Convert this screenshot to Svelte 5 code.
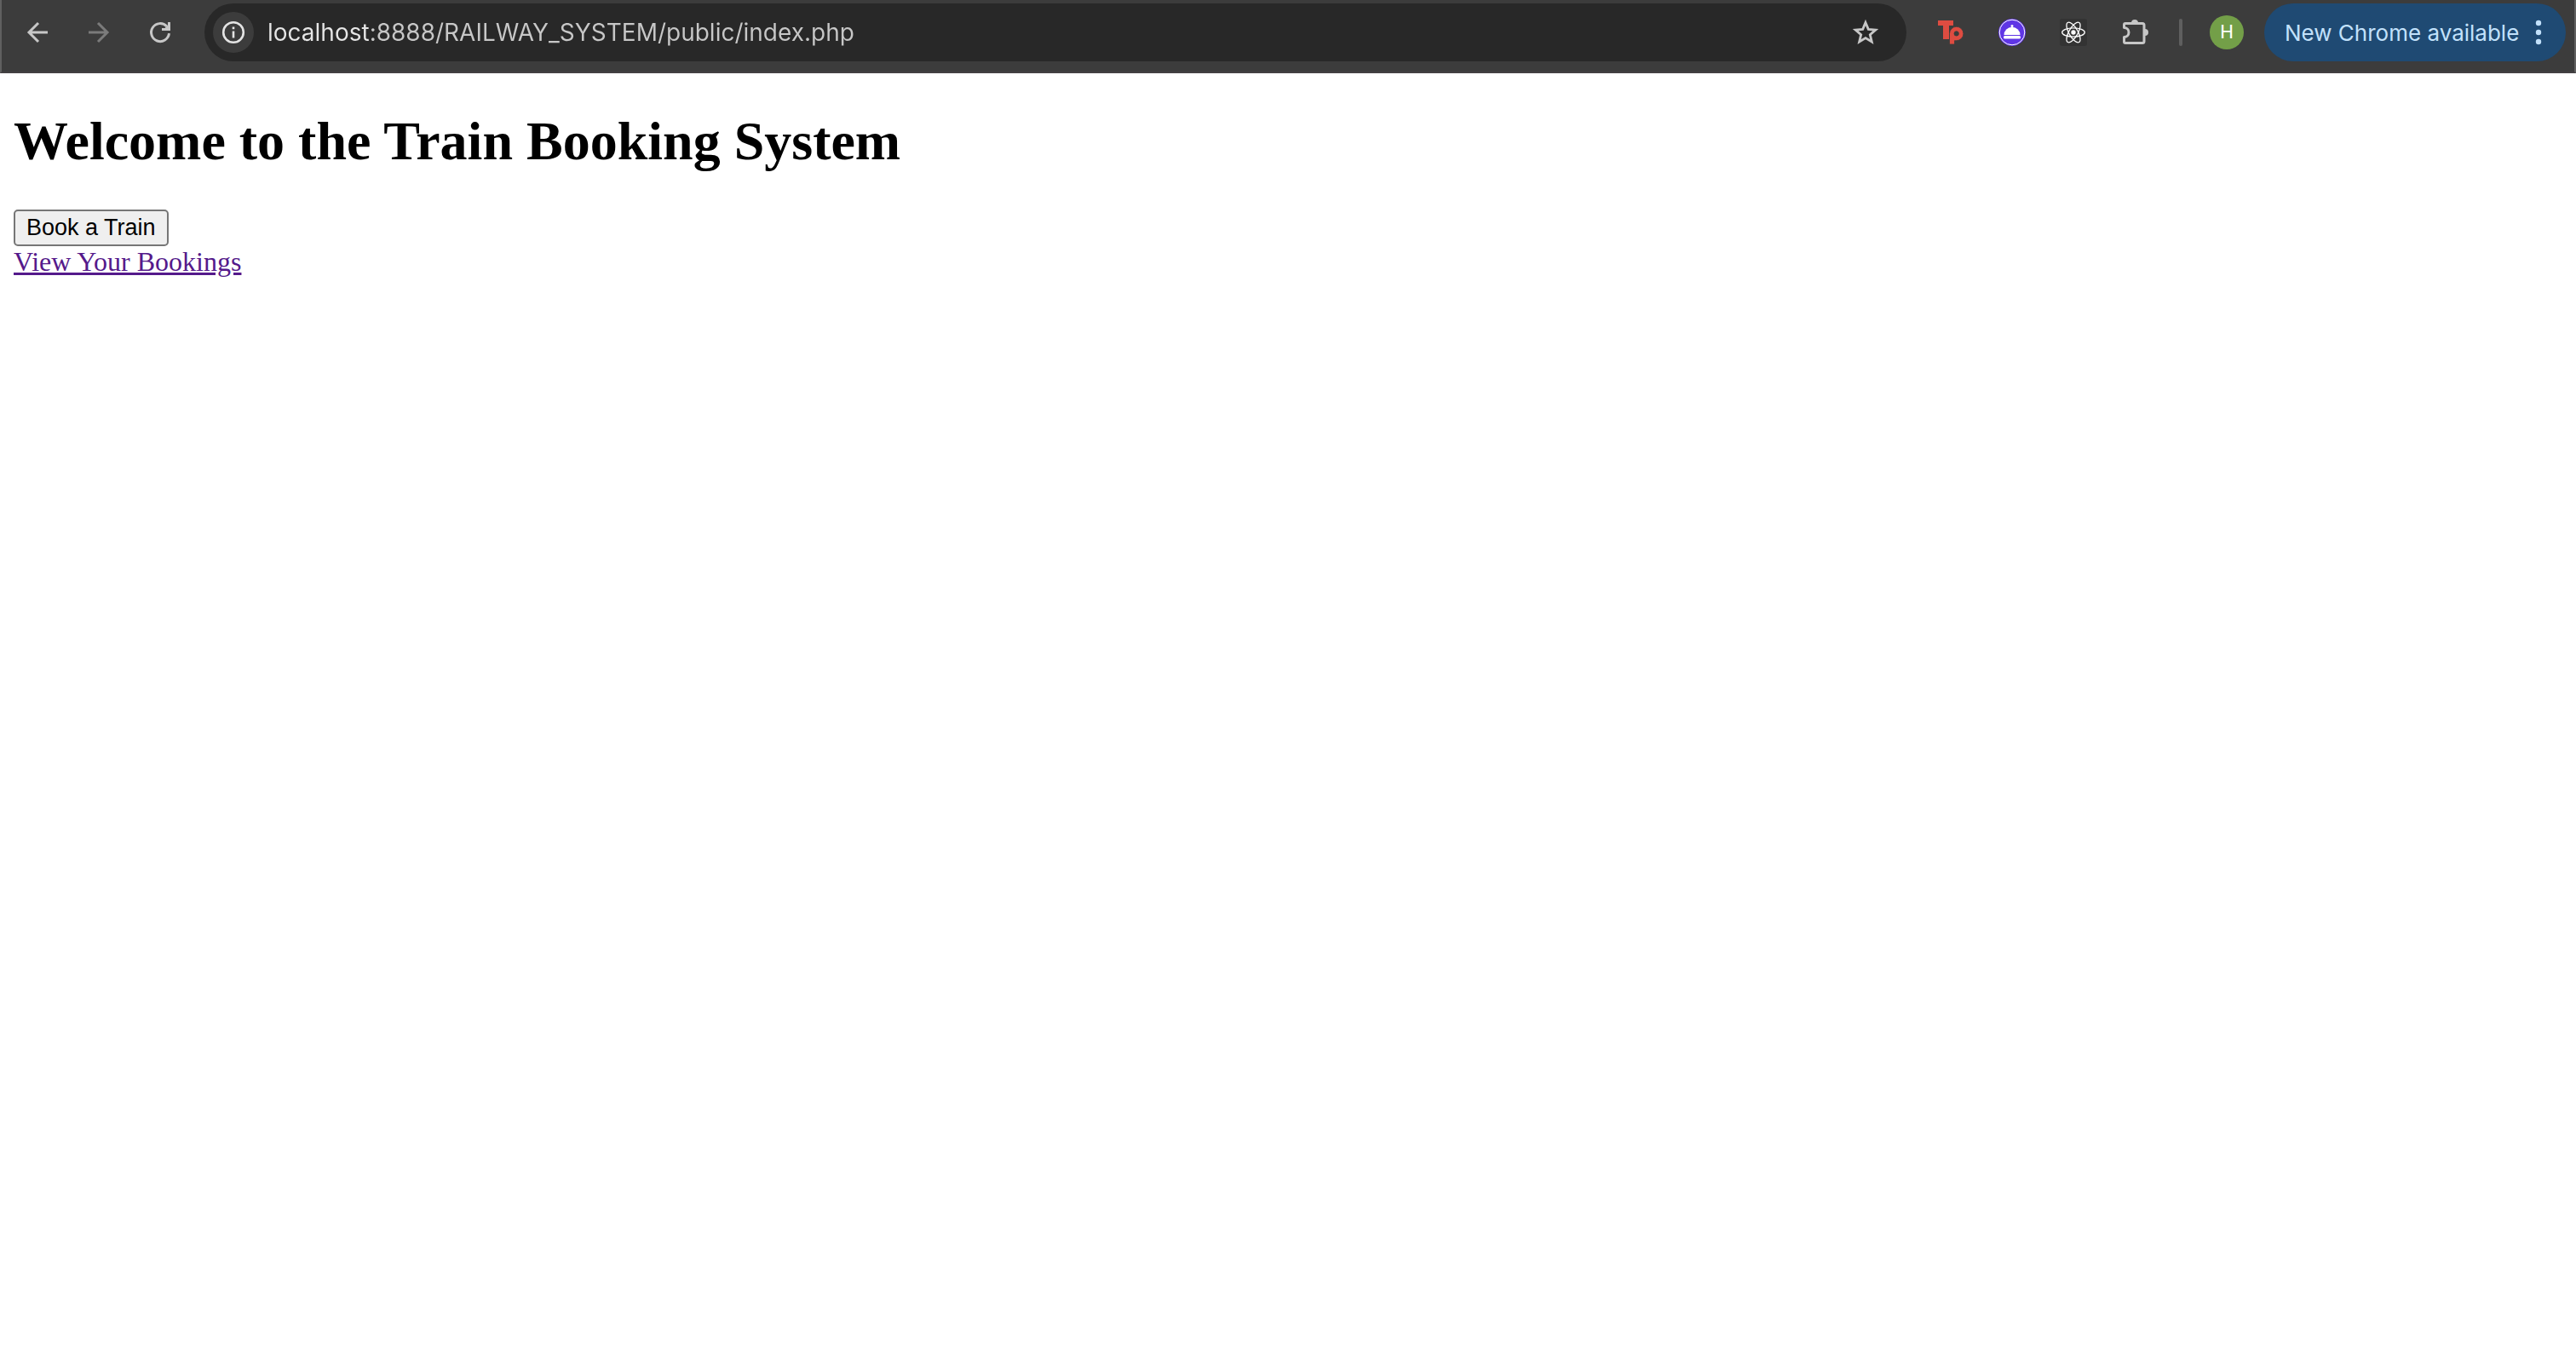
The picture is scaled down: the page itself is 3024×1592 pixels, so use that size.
<script>
  let url = $state('localhost:8888/RAILWAY_SYSTEM/public/index.php');
</script>

<div class="window">
  <header class="toolbar">
    <nav class="group" aria-label="History">
      <button class="tool" aria-label="Back">
        <svg width="36" height="36" viewBox="0 0 36 36" fill="none" stroke="#c7c7c7" stroke-width="3">
          <path d="M30 18H8M19 7L8 18l11 11" />
        </svg>
      </button>
      <button class="tool" aria-label="Forward" disabled>
        <svg width="36" height="36" viewBox="0 0 36 36" fill="none" stroke="#7b7b7b" stroke-width="3">
          <path d="M6 18h22M17 7l11 11-11 11" />
        </svg>
      </button>
      <button class="tool" aria-label="Reload">
        <svg width="36" height="36" viewBox="0 0 36 36" fill="none" stroke="#c7c7c7" stroke-width="3">
          <path d="M28.5 19.2A10.5 10.5 0 1 1 25.8 11" />
          <path d="M30 6v10H20v-3h3.500l3.500-3.500V6z" fill="#c7c7c7" stroke="none" />
        </svg>
      </button>
    </nav>

    <div class="omnibox">
      <button class="info" aria-label="View site information">
        <svg width="28" height="28" viewBox="0 0 28 28">
          <circle cx="14" cy="14" r="11.8" fill="none" stroke="#e3e3e3" stroke-width="2.6" />
          <path d="M12.7 12.5h2.6v8h-2.600zM12.7 7.5h2.6v2.8h-2.600z" fill="#e3e3e3" />
        </svg>
      </button>
      <input class="url" type="text" aria-label="Address" spellcheck="false" bind:value={url} />
      <button class="star" aria-label="Bookmark this tab">
        <svg width="32" height="32" viewBox="0 0 32 32" fill="none" stroke="#c7c7c7" stroke-width="2.8">
          <path d="M16 4.5l3.3 7.9 8.5.7-6.5 5.6 2 8.3-7.3-4.4-7.300 4.4 2-8.3-6.500-5.600 8.500-.7z" />
        </svg>
      </button>
    </div>

    <div class="group">
      <button class="tool" aria-label="Toptal extension">
        <svg width="32" height="32" viewBox="0 0 32 32">
          <path d="M1 2h18v6h-5v16H7V8H1z" fill="#de4c41" />
          <path
            d="M14.5 30V17.5a8.2 8.2 0 1 1 8.2 8.2H20.5V30zM22.7 14.7a2.7 2.7 0 1 0 0 5.4 2.7 2.7 0 0 0 0-5.4z"
            fill="#de4c41" stroke="#3c3c3c" stroke-width="0.8" fill-rule="evenodd" />
        </svg>
      </button>
      <button class="tool" aria-label="Meal extension">
        <svg width="32" height="32" viewBox="0 0 32 32">
          <circle cx="16" cy="16" r="16" fill="#5f35e5" />
          <circle cx="16" cy="16" r="14.8" fill="none" stroke="#fff" stroke-width="1" />
          <circle cx="16" cy="8.5" r="1.5" fill="#fff" />
          <path d="M6.5 19a9.5 9.3 0 0 1 19 0z" fill="#fff" />
          <rect x="6" y="20" width="20" height="3.6" rx="1.6" fill="#fff" />
        </svg>
      </button>
      <button class="tool" aria-label="React Developer Tools">
        <svg width="32" height="32" viewBox="0 0 32 32">
          <rect width="32" height="32" rx="3" fill="#333" />
          <circle cx="16" cy="16" r="2.7" fill="#fff" />
          <g fill="none" stroke="#fff" stroke-width="1.3">
            <ellipse cx="16" cy="16" rx="13.3" ry="5.2" />
            <ellipse cx="16" cy="16" rx="13.3" ry="5.2" transform="rotate(60 16 16)" />
            <ellipse cx="16" cy="16" rx="13.3" ry="5.2" transform="rotate(120 16 16)" />
          </g>
        </svg>
      </button>
      <button class="tool" aria-label="Extensions">
        <svg width="36" height="36" viewBox="0 0 36 36">
          <path
            d="M7 7.5h20a2 2 0 0 1 2 2v19a2 2 0 0 1-2 2H7a1.5 1.5 0 0 1-1.5-1.5v-5.5a5.2 5.2 0 0 0 0-11V9A1.5 1.5 0 0 1 7 7.5z"
            fill="none" stroke="#c7c7c7" stroke-width="3" stroke-linejoin="round" />
          <path d="M14 7a4 4 0 0 1 8 0zM30 14a4 4 0 0 1 0 8z" fill="#c7c7c7" />
        </svg>
      </button>
    </div>

    <span class="divider"></span>

    <button class="tool" aria-label="Profile"><span class="avatar">H</span></button>

    <button class="update">
      <span>New Chrome available</span>
      <svg width="8" height="32" viewBox="0 0 8 32" fill="#c2e1fb">
        <circle cx="4" cy="5" r="3.2" />
        <circle cx="4" cy="16" r="3.2" />
        <circle cx="4" cy="27" r="3.2" />
      </svg>
    </button>
  </header>

  <main>
    <h1>Welcome to the Train Booking System</h1>
    <button class="book">Book a Train</button>
    <div><a href="#bookings">View Your Bookings</a></div>
  </main>
</div>

<style>
  :global(body) {
    margin: 0;
    background: #fff;
  }

  button {
    margin: 0;
    padding: 0;
    border: 0;
    background: none;
    font: inherit;
  }

  svg {
    display: block;
  }

  .toolbar {
    display: flex;
    align-items: center;
    padding: 4px 10px 12px 8px;
    border-left: 2px solid #606060;
    border-right: 2px solid #606060;
    border-bottom: 2px solid #434042;
    background: #3c3c3c;
    font-family: Inter, "Liberation Sans", sans-serif;
  }

  .group {
    display: flex;
    gap: 4px;
  }

  .tool {
    display: grid;
    place-items: center;
    width: 68px;
    height: 68px;
  }

  .omnibox {
    display: flex;
    flex: 1;
    align-items: center;
    min-width: 0;
    height: 68px;
    margin: 0 18px;
    padding: 0 32px 0 10px;
    box-sizing: border-box;
    border-radius: 34px;
    background: #282828;
  }

  .info {
    display: grid;
    flex: none;
    place-items: center;
    width: 48px;
    height: 48px;
    border-radius: 50%;
    background: #3c3c3c;
  }

  .url {
    flex: 1;
    min-width: 0;
    height: 40px;
    margin-left: 16px;
    padding: 0;
    border: 0;
    outline: 0;
    background: linear-gradient(90deg, #e6e6e6 120px, #c7c7c7 120px);
    background-clip: text;
    color: transparent;
    font: 400 28px/40px Inter, "Liberation Sans", sans-serif;
  }

  .divider {
    width: 4px;
    height: 32px;
    margin: 0 18px;
    border-radius: 2px;
    background: #5f5f5f;
  }

  .avatar {
    display: grid;
    place-items: center;
    width: 40px;
    height: 40px;
    border-radius: 50%;
    background: #739f48;
    color: #fff;
    font: 400 22px/40px Roboto, sans-serif;
  }

  .update {
    display: flex;
    align-items: center;
    justify-content: space-between;
    width: 354px;
    height: 68px;
    margin-left: 10px;
    padding: 0 28px 0 24px;
    border-radius: 34px;
    background: #1f4a73;
    color: #c2e1fb;
    font-size: 26px;
    font-weight: 400;
    white-space: nowrap;
  }

  main {
    padding: 43px 16px;
    color: #000;
    font: 32px/36px "Liberation Serif", serif;
  }

  h1 {
    margin: 0 0 43px;
    font-size: 64px;
    font-weight: 700;
    line-height: 74px;
  }

  .book {
    display: block;
    padding: 2px 13px;
    border: 2px solid #767676;
    border-radius: 5px;
    background: #efefef;
    color: #000;
    font: 27px/35px "Liberation Sans", sans-serif;
  }

  a {
    color: #551a8b;
    text-decoration: underline;
  }
</style>
